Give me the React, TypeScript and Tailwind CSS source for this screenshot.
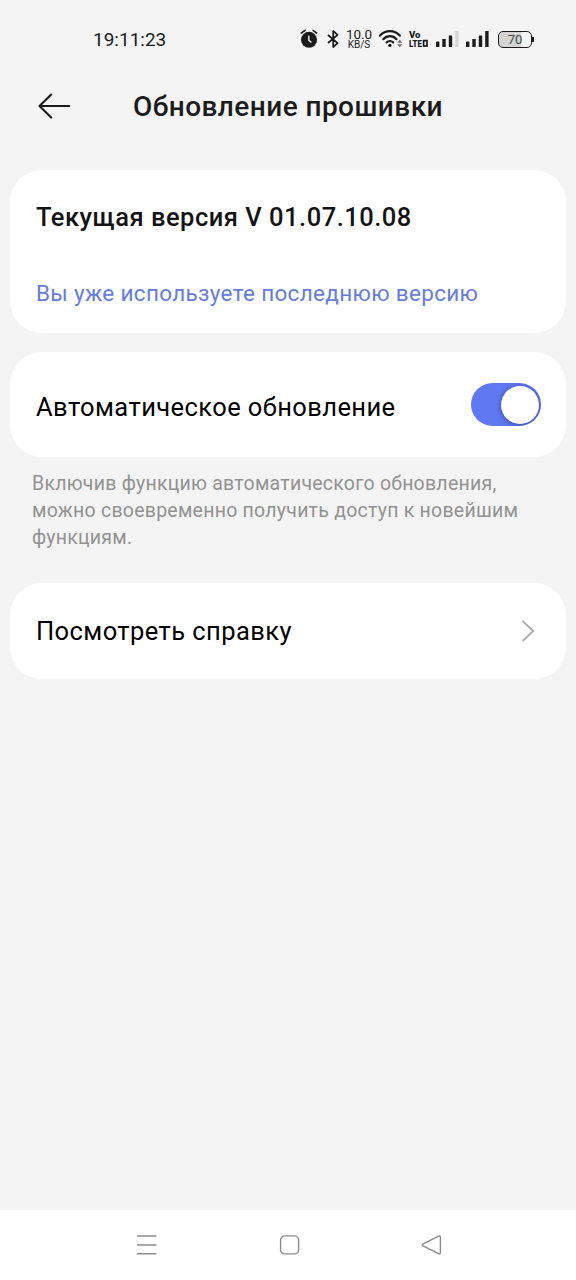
import React from 'react';

const AlarmIcon = () => (
  <svg className="h-5 w-[18px] shrink-0" viewBox="0 0 18 20" fill="none">
    <circle cx="9" cy="10.8" r="8" fill="#1b1b1b" />
    <path d="M1.3 4.2 5 1.3M16.7 4.2 13 1.3" stroke="#1b1b1b" strokeWidth="1.6" strokeLinecap="round" />
    <path d="M8.8 7.2v4l2.2 1.9" stroke="#f4f4f4" strokeWidth="1.4" strokeLinecap="round" />
  </svg>
);

const BluetoothIcon = () => (
  <svg className="h-[18px] w-3 shrink-0" viewBox="0 0 12 18" fill="none">
    <path d="M1 5l9.6 8.2L6.2 17V1l4.4 3.8L1 13" stroke="#1b1b1b" strokeWidth="1.7" strokeLinejoin="round" />
  </svg>
);

const WifiIcon = () => (
  <svg className="h-[18px] w-6 shrink-0" viewBox="0 0 24 18" fill="none">
    <path d="M1 5.6c5.4-6 14.4-6 19.8 0" stroke="#1b1b1b" strokeWidth="2.2" strokeLinecap="round" />
    <path d="M4.3 9.2c3.6-4 9.6-4 13.2 0" stroke="#1b1b1b" strokeWidth="2.2" strokeLinecap="round" />
    <path d="M7.5 12.5c2-2 4.8-2 6.8 0" stroke="#1b1b1b" strokeWidth="2.1" strokeLinecap="round" />
    <circle cx="10.9" cy="15.4" r="1.7" fill="#1b1b1b" />
    <path d="M18.2 12.7 20.8 9.7l2.6 3zM18.2 14.3l2.6 3 2.6-3z" fill="#6b6b6b" />
  </svg>
);

const SignalIcon = ({ weak = false }: { weak?: boolean }) => (
  <svg className="h-4 w-[23px] shrink-0" viewBox="0 0 23 16">
    <rect x="0" y="10.5" width="3.4" height="5.5" rx="0.6" fill="#1b1b1b" />
    <rect x="6.3" y="8" width="3.4" height="8" rx="0.6" fill="#1b1b1b" />
    <rect x="12.8" y="4.5" width="3.4" height="11.5" rx="0.6" fill="#1b1b1b" />
    <rect x="19.2" y="0" width="3.4" height="16" rx="0.6" fill={weak ? '#d6d6d6' : '#1b1b1b'} />
  </svg>
);

const StatusBar = () => (
  <div className="flex h-[78px] items-center pl-[93px] text-[#1b1b1b]">
    <span className="w-[207px] pt-px text-[19px] leading-6">19:11:23</span>
    <div className="flex h-6 items-center">
      <AlarmIcon />
      <div className="w-[9px]" />
      <BluetoothIcon />
      <div className="flex w-[40px] flex-col items-center">
        <span className="text-[13.5px] leading-[11px] tracking-[-0.1px]">10.0</span>
        <span className="text-[10px] leading-[10px]">KB/S</span>
      </div>
      <WifiIcon />
      <svg className="ml-[6px] h-5 w-5 shrink-0" viewBox="0 0 20 20" fill="#1b1b1b">
        <text x="0" y="9" fontSize="9.8" fontWeight="900" textLength="11.5" lengthAdjust="spacingAndGlyphs">Vo</text>
        <text x="0" y="17.8" fontSize="9.8" fontWeight="900" textLength="12.8" lengthAdjust="spacingAndGlyphs">LTE</text>
        <rect x="14.6" y="11.6" width="3.4" height="5.4" fill="none" stroke="#1b1b1b" strokeWidth="1.7" />
      </svg>
      <div className="w-[7px]" />
      <SignalIcon weak />
      <div className="w-[7px]" />
      <SignalIcon />
      <div className="ml-[9px] flex items-center">
        <div className="flex h-[17px] w-[34px] items-center justify-center rounded-[5px] border-[1.5px] border-[#1b1b1b] bg-linear-to-r from-[#d4d4d4] from-70% to-[#f4f4f4] to-70% text-[13px] leading-none text-[#444]">
          70
        </div>
        <div className="h-[5px] w-[1.5px] bg-[#1b1b1b]" />
      </div>
    </div>
  </div>
);

const Header = () => (
  <header className="flex h-[57px] items-center pl-[38px]">
    <button className="w-[95px] pb-px" aria-label="Назад">
      <svg className="h-[26px] w-8" viewBox="0 0 32 26" fill="none">
        <path d="M13.2 1.5 1.5 13l11.7 11.5M1.5 13H31" stroke="#1b1b1b" strokeWidth="2.1" strokeLinecap="round" strokeLinejoin="round" />
      </svg>
    </button>
    <h1 className="whitespace-nowrap text-[28px] font-medium leading-8 tracking-[0.45px] text-[#1b1b1b]">
      Обновление прошивки
    </h1>
  </header>
);

const Toggle = () => (
  <button
    role="switch"
    aria-checked="true"
    aria-label="Автоматическое обновление"
    className="flex h-[43px] w-[70px] items-center justify-end overflow-hidden rounded-full bg-[#6079f3] pr-[2px]"
  >
    <span className="h-[38px] w-[38px] rounded-full bg-white shadow-[0_1px_5px_1px_rgba(30,40,110,0.45)]" />
  </button>
);

const NavBar = () => (
  <nav className="flex h-[70px] items-center bg-white pl-[136px] text-[#8c8c8c]">
    <svg className="h-[22px] w-[22px]" viewBox="0 0 22 22" stroke="currentColor" strokeWidth="1.6">
      <path d="M1 2h19.4M1 11h19.4M1 19.8h19.4" />
    </svg>
    <svg className="ml-[121px] h-[22px] w-[22px]" viewBox="0 0 22 22" fill="none" stroke="currentColor" strokeWidth="1.4">
      <rect x="1.6" y="1.9" width="18" height="18" rx="4.2" />
    </svg>
    <svg className="ml-[120px] h-[22px] w-[22px]" viewBox="0 0 22 22" fill="none" stroke="currentColor" strokeWidth="1.4">
      <path d="M2.2 9.8 17.6 2.2Q19.4 1.4 19.4 3.6v14.8Q19.4 20.6 17.6 19.6L2.2 12Q.4 10.9 2.2 9.8z" />
    </svg>
  </nav>
);

const App: React.FC = () => {
  return (
    <div className="flex h-[1280px] w-[576px] flex-col bg-[#f4f4f4] font-[Roboto,sans-serif]">
      <StatusBar />
      <Header />

      <main className="flex flex-1 flex-col px-[10px] pt-[35px]">
        <section className="h-[163px] rounded-[32px] bg-white px-[26px] pt-[31px]">
          <h2 className="text-[25.5px] font-medium leading-8 tracking-[0.5px] text-[#141414]">Текущая версия V 01.07.10.08</h2>
          <p className="mt-[45px] text-[22.5px] leading-[30px] tracking-[0.32px] text-[#667cdc]">
            Вы уже используете последнюю версию
          </p>
        </section>

        <section className="mt-[19px] flex h-[105px] items-center justify-between rounded-[32px] bg-white pl-[26px] pr-[25px]">
          <span className="pt-1 text-[25.5px] leading-8 tracking-[0.42px] text-black">Автоматическое обновление</span>
          <Toggle />
        </section>

        <p className="mt-[13px] whitespace-nowrap pl-[22px] text-[19.5px] leading-[27px] tracking-[0.24px] text-[#929292]">
          Включив функцию автоматического обновления,
          <br />
          можно своевременно получить доступ к новейшим
          <br />
          функциям.
        </p>

        <section className="mt-[32px] flex h-[96px] items-center justify-between rounded-[32px] bg-white pl-[26px] pr-[31px]">
          <span className="text-[25.5px] leading-8 tracking-[0.42px] text-black">Посмотреть справку</span>
          <svg className="h-6 w-[14px]" viewBox="0 0 14 24" fill="none">
            <path d="M1.5 1.8 12.2 12 1.5 22.2" stroke="#a8a8a8" strokeWidth="1.8" />
          </svg>
        </section>
      </main>

      <NavBar />
    </div>
  );
};

export default App;
